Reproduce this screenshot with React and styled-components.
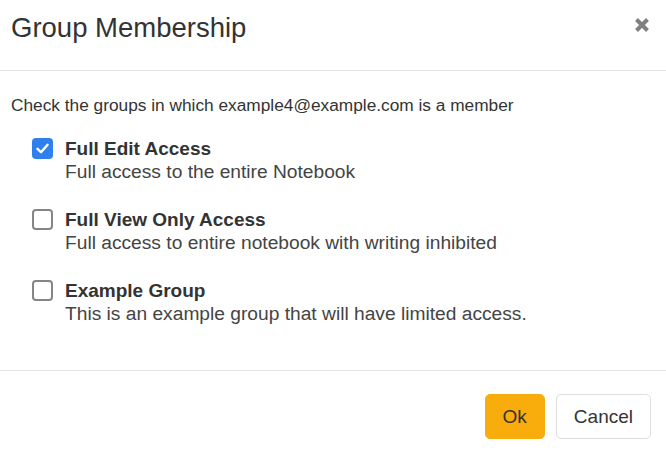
import React, { useState } from "react";
import styled, { createGlobalStyle } from "styled-components";

const Global = createGlobalStyle`
  html, body { margin: 0; padding: 0; background: #fff; }
  body { font-family: "Liberation Sans", Arial, sans-serif; color: #333; }
`;

const Dialog = styled.div`
  width: 666px;
  height: 454px;
  display: flex;
  flex-direction: column;
  background: #fff;
`;

const Header = styled.div`
  height: 70px;
  box-sizing: content-box;
  border-bottom: 1px solid #e5e5e5;
  display: flex;
  justify-content: space-between;
  align-items: flex-start;
  padding: 0 16px 0 11px;
`;

const Title = styled.h4`
  margin: 9px 0 0;
  font-size: 27.5px;
  line-height: 38px;
  font-weight: 400;
  color: #333;
`;

const Close = styled.button`
  margin-top: 17px;
  padding: 0;
  border: 0;
  background: none;
  width: 16px;
  height: 16px;
  cursor: pointer;
  display: flex;
`;

const Body = styled.div`
  flex: 1;
  padding: 22px 12px 0 11px;
  border-bottom: 1px solid #e5e5e5;
`;

const Intro = styled.p`
  margin: 0;
  font-size: 17.3px;
  line-height: 24px;
  color: #333;
`;

const List = styled.div`
  display: flex;
  flex-direction: column;
  gap: 25px;
  margin-top: 20px;
  padding-left: 21px;
`;

const Item = styled.label`
  display: flex;
  align-items: flex-start;
  gap: 12px;
  cursor: pointer;
`;

const Box = styled.span`
  flex: none;
  box-sizing: border-box;
  width: 21px;
  height: 21px;
  margin-top: 1px;
  border-radius: 4px;
  border: ${(p) => (p.$checked ? "none" : "2px solid #858585")};
  background: ${(p) => (p.$checked ? "#2f80ed" : "#fff")};
  display: flex;
  align-items: center;
  justify-content: center;
`;

const Texts = styled.div`
  display: flex;
  flex-direction: column;
`;

const Name = styled.span`
  font-size: 19px;
  line-height: 23px;
  font-weight: 700;
  color: #333;
`;

const Desc = styled.span`
  font-size: 19.2px;
  line-height: 23px;
  color: #444;
`;

const Footer = styled.div`
  height: 83px;
  box-sizing: border-box;
  display: flex;
  justify-content: flex-end;
  align-items: flex-start;
  gap: 11px;
  padding: 23px 15px 0;
`;

const Button = styled.button`
  height: 45px;
  padding: 0 17px;
  font-family: "Liberation Sans", Arial, sans-serif;
  font-size: 19px;
  border-radius: 5px;
  cursor: pointer;
  color: #333;
  border: 1px solid ${(p) => (p.$primary ? "#f9ad0c" : "#dedede")};
  background: ${(p) => (p.$primary ? "#f9ad0c" : "#fff")};
`;

const groups = [
  { name: "Full Edit Access", desc: "Full access to the entire Notebook", checked: true },
  { name: "Full View Only Access", desc: "Full access to entire notebook with writing inhibited", checked: false },
  { name: "Example Group", desc: "This is an example group that will have limited access.", checked: false },
];

function Check({ checked }) {
  return (
    <Box $checked={checked}>
      {checked && (
        <svg width="15" height="15" viewBox="0 0 15 15">
          <path d="M2.5 7.8 L6 11.2 L12.6 3.8" fill="none" stroke="#fff" strokeWidth="2.4" strokeLinecap="round" strokeLinejoin="round" />
        </svg>
      )}
    </Box>
  );
}

export default function App() {
  const [state, setState] = useState(groups.map((g) => g.checked));
  return (
    <>
      <Global />
      <Dialog>
        <Header>
          <Title>Group Membership</Title>
          <Close aria-label="Close">
            <svg width="16" height="16" viewBox="0 0 16 16">
              <path d="M2.5 2.5 L13.5 13.5 M13.5 2.5 L2.5 13.5" stroke="#808080" strokeWidth="4" strokeLinecap="butt" />
            </svg>
          </Close>
        </Header>
        <Body>
          <Intro>Check the groups in which example4@example.com is a member</Intro>
          <List>
            {groups.map((g, i) => (
              <Item key={g.name} onClick={() => setState((s) => s.map((v, j) => (j === i ? !v : v)))}>
                <Check checked={state[i]} />
                <Texts>
                  <Name>{g.name}</Name>
                  <Desc>{g.desc}</Desc>
                </Texts>
              </Item>
            ))}
          </List>
        </Body>
        <Footer>
          <Button $primary>Ok</Button>
          <Button>Cancel</Button>
        </Footer>
      </Dialog>
    </>
  );
}
